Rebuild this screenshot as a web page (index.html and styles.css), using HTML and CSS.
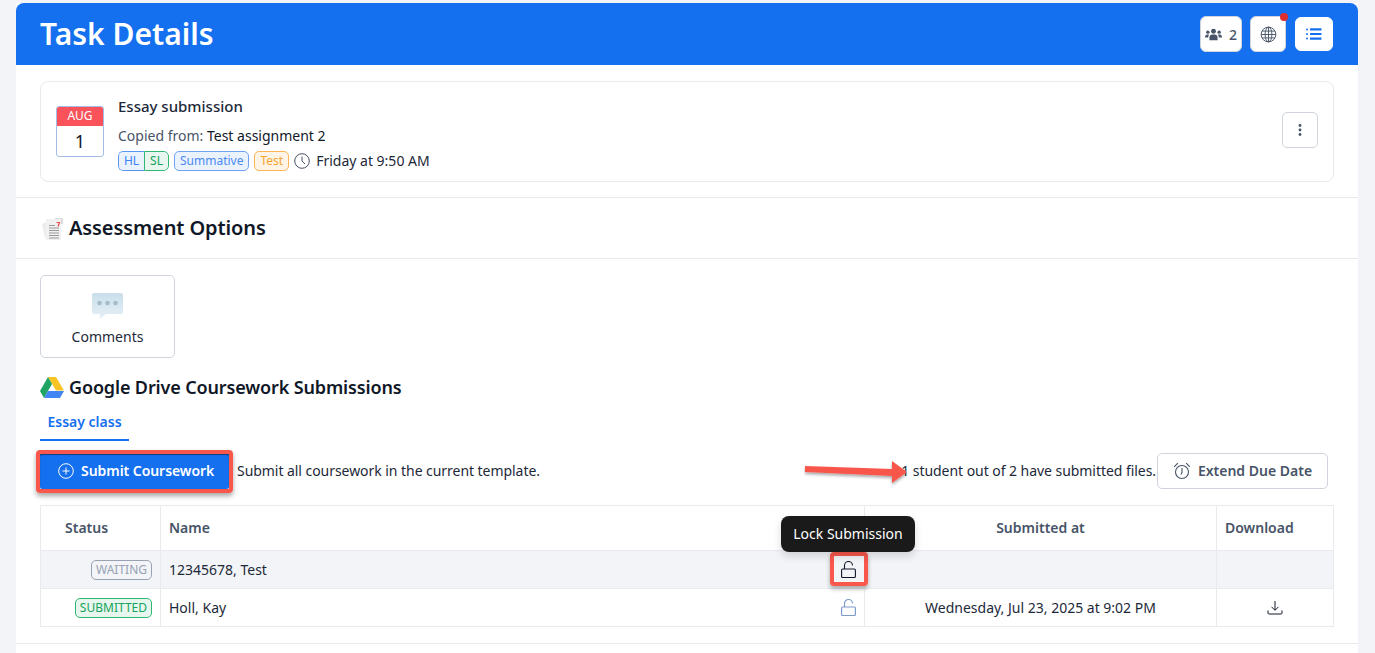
FILE: index.html
```html
<!DOCTYPE html>
<html lang="en">
<head>
<meta charset="utf-8">
<title>Task Details</title>
<link rel="stylesheet" href="styles.css">
</head>
<body>
<main class="page">
  <header class="topbar">
    <h1 class="topbar-title">Task Details</h1>
    <div class="topbar-actions">
      <button class="top-btn top-btn-users">
        <svg class="i-users" viewBox="0 0 18 13" width="17" height="13"><g fill="#475467"><circle cx="9" cy="3" r="2.6"/><circle cx="3" cy="4" r="1.8"/><circle cx="15" cy="4" r="1.8"/><path d="M4.7 12.5V9.6c0-2 1.4-3.2 3-3.2h2.6c1.6 0 3 1.200 3 3.200v2.900z"/><path d="M0 9.800C0 7.800 1.100 6.600 2.400 6.600h1.900c-.6.700-.9 1.700-.9 2.800v.4zM18 9.800c0-2-1.100-3.200-2.400-3.200h-1.900c.6.700.9 1.700.9 2.800v.4z"/></g></svg>
        <span>2</span>
      </button>
      <button class="top-btn top-btn-globe">
        <svg viewBox="0 0 18 18" width="17" height="17" fill="none" stroke="#475467" stroke-width="1"><circle cx="9" cy="9" r="7.800"/><ellipse cx="9" cy="9" rx="3.600" ry="7.800"/><path d="M9 1.200v15.600M1.200 9h15.600M2.200 5.400h13.600M2.200 12.600h13.600"/></svg>
        <span class="dot"></span>
      </button>
      <button class="top-btn top-btn-list">
        <svg viewBox="0 0 16 12" width="16" height="12" fill="#1570ef"><rect x="0" y="0.500" width="2" height="2" rx="1"/><rect x="0" y="5" width="2" height="2" rx="1"/><rect x="0" y="9.500" width="2" height="2" rx="1"/><rect x="4" y="0.300" width="11.500" height="2.200" rx=".5"/><rect x="4" y="4.900" width="11.500" height="2.200" rx=".5"/><rect x="4" y="9.500" width="11.500" height="2.200" rx=".5"/></svg>
      </button>
    </div>
  </header>

  <section class="section section-task">
    <div class="task-card">
      <div class="cal">
        <div class="cal-month">AUG</div>
        <div class="cal-day">1</div>
      </div>
      <div class="task-info">
        <div class="task-name">Essay submission</div>
        <div class="task-copied"><span class="muted">Copied from:</span> Test assignment 2</div>
        <div class="task-tags">
          <span class="pair"><span class="pair-hl">HL</span><span class="pair-sl">SL</span></span>
          <span class="tag tag-blue">Summative</span>
          <span class="tag tag-orange">Test</span>
          <svg class="clock" viewBox="0 0 16 16" width="16" height="16" fill="none" stroke="#475467" stroke-width="1"><circle cx="8" cy="8" r="7.300"/><path d="M8 3.500V8l3 3"/></svg>
          <span class="task-time">Friday at 9:50 AM</span>
        </div>
      </div>
      <button class="kebab" aria-label="More">
        <svg viewBox="0 0 4 14" width="4" height="14" fill="#475467"><circle cx="2" cy="2.500" r="1.400"/><circle cx="2" cy="7" r="1.400"/><circle cx="2" cy="11.500" r="1.400"/></svg>
      </button>
    </div>
  </section>

  <section class="section section-title">
    <svg class="doc-icon" viewBox="0 0 22 22" width="22" height="22">
      <path d="M0 6l5-2 1 15-3 1z" fill="#ececec"/>
      <rect x="13" y="0" width="8" height="6" fill="#d9dcdc"/>
      <rect x="4" y="1" width="15" height="21" fill="#f1f1f1"/>
      <g stroke="#9a9a9a" stroke-width="1"><path d="M7 7.500h6M7 10h10M7 12.500h10M7 15h10M7 17.500h10M7 20h10"/></g>
      <path d="M14.500 4.500h3l-1.500 4" fill="none" stroke="#ea4b4b" stroke-width="1.200"/>
    </svg>
    <h2 class="h-options">Assessment Options</h2>
  </section>

  <section class="section-body">
    <div class="option-card">
      <svg viewBox="0 0 31 26" width="31" height="26"><defs><linearGradient id="bub" x1="0" y1="0" x2="0" y2="1"><stop offset="0" stop-color="#c9deeb"/><stop offset="1" stop-color="#e6f0f6"/></linearGradient></defs><path d="M2 0h27a2 2 0 0 1 2 2v17a2 2 0 0 1-2 2H14l-6 5v-5H2a2 2 0 0 1-2-2V2a2 2 0 0 1 2-2z" fill="url(#bub)"/><g fill="#a4bccc"><circle cx="7.500" cy="10" r="2.300"/><circle cx="15.500" cy="10" r="2.300"/><circle cx="23.500" cy="10" r="2.300"/></g></svg>
      <span class="option-label">Comments</span>
    </div>

    <div class="drive-title">
      <svg viewBox="0 0 24 21" width="24" height="21"><path d="M8 0h8l8 13.500h-8z" fill="#f7c325"/><path d="M8 0l4 7-8 14-4-7z" fill="#1fa463"/><path d="M8 14h16l-4 7H4z" fill="#4285f4"/></svg>
      <h3 class="h-drive">Google Drive Coursework Submissions</h3>
    </div>

    <nav class="tabs"><span class="tab">Essay class</span></nav>

    <div class="toolbar">
      <button class="btn-primary">
        <svg viewBox="0 0 16 16" width="16" height="16" fill="none" stroke="#fff" stroke-width="1"><circle cx="8" cy="8" r="7.300"/><path d="M8 4.500v7M4.500 8h7"/></svg>
        <span class="btn-label">Submit Coursework</span>
      </button>
      <span class="toolbar-text">Submit all coursework in the current template.</span>
      <span class="toolbar-text toolbar-count">1 student out of 2 have submitted files.</span>
      <button class="btn-outline">
        <svg viewBox="0 0 18 18" width="18" height="18" fill="none" stroke="#475467" stroke-width="1.100"><circle cx="9" cy="10" r="6.500"/><path d="M9 6v4.500l-1 2M1.200 4.800L4.800 1.200M16.800 4.800L13.200 1.200"/></svg>
        <span class="btn-label">Extend Due Date</span>
      </button>
    </div>

    <table class="grid">
      <colgroup><col class="c-status"><col class="c-name"><col class="c-at"><col class="c-dl"></colgroup>
      <thead>
        <tr><th class="th-status">Status</th><th class="th-left">Name</th><th>Submitted at</th><th class="th-left">Download</th></tr>
      </thead>
      <tbody>
        <tr class="row-alt">
          <td class="td-status"><span class="badge badge-grey">WAITING</span></td>
          <td class="td-name"><div class="name-wrap">12345678, Test
            <svg class="lock" viewBox="0 0 15 17" width="15" height="17" fill="none" stroke="#101828" stroke-width="1.100"><rect x=".6" y="8" width="13.800" height="8.500" rx="1"/><path d="M3.500 8V4.500a4 4 0 0 1 8 0"/></svg>
          </div></td>
          <td></td><td></td>
        </tr>
        <tr>
          <td class="td-status"><span class="badge badge-green">SUBMITTED</span></td>
          <td class="td-name"><div class="name-wrap">Holl, Kay
            <svg class="lock" viewBox="0 0 15 17" width="15" height="17" fill="none" stroke="#7f9ccb" stroke-width="1.200"><rect x=".6" y="8" width="13.800" height="8.500" rx="1"/><path d="M3.500 8V4.500a4 4 0 0 1 8 0"/></svg>
          </div></td>
          <td class="td-center">Wednesday, Jul 23, 2025 at 9:02 PM</td>
          <td class="td-center"><svg class="dl" viewBox="0 0 16 15" width="16" height="15" fill="none" stroke="#101828" stroke-width="1"><path d="M8 1v9M4.500 6.800L8 10.300l3.500-3.500M1 10.500V13a1 1 0 0 0 1 1h12a1 1 0 0 0 1-1v-2.500"/></svg></td>
        </tr>
      </tbody>
    </table>
    <div class="tail"></div>
  </section>

  <!-- annotations drawn on top of the page -->
  <div class="note-btn"></div>
  <div class="note-lock"></div>
  <svg class="note-arrow" viewBox="0 0 110 36" width="110" height="36">
    <defs><filter id="sh" x="-10%" y="-30%" width="120%" height="170%"><feDropShadow dx="0" dy="2" stdDeviation="1.500" flood-color="#000" flood-opacity=".35"/></filter></defs>
    <path d="M1 7L88 10 88 2 103 13 88 24 88 17 1 13z" fill="#f9574c" filter="url(#sh)"/>
  </svg>
  <div class="tooltip">Lock Submission</div>
</main>
</body>
</html>
```
FILE: styles.css
```css
* { box-sizing: border-box; }
html, body { margin: 0; height: 100%; }
body {
  background: #f2f4f8;
  font-family: "Noto Sans", "Open Sans", sans-serif;
  color: #101828;
  font-size: 14px;
  overflow: hidden;
  padding: 3px 17px 0 16px;
}
button { font-family: inherit; cursor: pointer; }
h1, h2, h3 { margin: 0; }

.page { background: #fff; min-height: 700px; position: relative; }

.topbar {
  height: 62px;
  background: #1570ef;
  border-radius: 8px 8px 0 0;
  display: flex;
  align-items: center;
  justify-content: space-between;
  padding: 0 25px 0 24px;
}
.topbar-title { color: #fff; font-size: 30px; font-weight: 600; line-height: 36px; }
.topbar-actions { display: flex; align-items: center; gap: 8px; }
.top-btn {
  height: 36px;
  background: #fff;
  border: 1px solid #d0d5dd;
  border-radius: 6px;
  display: flex;
  align-items: center;
  justify-content: center;
  position: relative;
  padding: 0;
  color: #475467;
  font-size: 14px;
  font-weight: 500;
}
.top-btn-users { width: 42px; gap: 7px; }
.top-btn-globe { width: 36px; }
.top-btn-list { width: 38px; height: 34px; border-color: #fff; margin-left: 1px; }
.dot {
  position: absolute;
  top: -4px;
  right: -3px;
  width: 8px;
  height: 8px;
  border-radius: 50%;
  background: #e02d2d;
}

.section-task { padding: 16px 24px 15px; border-bottom: 1px solid #e8eaee; }
.task-card {
  height: 101px;
  border: 1px solid #e8eaee;
  border-radius: 8px;
  display: flex;
  align-items: flex-start;
  padding: 24px 15px 0;
}
.cal {
  width: 48px;
  height: 51px;
  border: 1px solid #a3bde6;
  border-radius: 3px;
  overflow: hidden;
  text-align: center;
  margin-right: 14px;
  flex: none;
}
.cal-month {
  background: #f9525a;
  color: #fff;
  font-size: 12px;
  line-height: 19px;
  margin: -1px -1px 0;
  height: 20px;
}
.cal-day { font-size: 18px; line-height: 30px; color: #101828; }
.task-info { flex: 1; margin-top: -10px; }
.task-name { font-size: 15px; line-height: 20px; font-weight: 500; color: #1d2939; }
.task-copied { line-height: 20px; margin-top: 10px; }
.muted { color: #475467; }
.task-tags { display: flex; align-items: center; margin-top: 5px; height: 20px; }
.pair {
  display: flex;
  height: 20px;
  font-size: 12px;
  line-height: 18px;
  border-radius: 5px;
  overflow: hidden;
  margin-right: 5px;
}
.pair-hl {
  width: 26px;
  text-align: center;
  color: #3b82f6;
  background: #eaf2fe;
  border: 1px solid #5a96f0;
  border-right: 0;
  border-radius: 5px 0 0 5px;
}
.pair-sl {
  width: 25px;
  text-align: center;
  color: #17a35c;
  background: #e7f6ee;
  border: 1px solid #2eb872;
  border-radius: 0 5px 5px 0;
}
.tag {
  height: 20px;
  font-size: 12px;
  line-height: 18px;
  border-radius: 5px;
  padding: 0 5px;
  margin-right: 5px;
}
.tag-blue { color: #4a8af0; background: #eaf2fe; border: 1px solid #6fa3f2; }
.tag-orange { color: #f8a52f; background: #fff4e6; border: 1px solid #fbb552; }
.clock { margin-right: 6px; }
.task-time { color: #1d2939; padding-bottom: 2px; }
.kebab {
  margin-top: 6px;
  width: 36px;
  height: 36px;
  background: #fff;
  border: 1px solid #d0d5dd;
  border-radius: 5px;
  display: flex;
  align-items: center;
  justify-content: center;
  padding: 0;
}

.section-title {
  height: 61px;
  border-bottom: 1px solid #e8eaee;
  display: flex;
  align-items: center;
  gap: 5px;
  padding: 0 24px;
}
.doc-icon { margin-top: 1px; margin-left: 2px; }
.h-options { font-size: 20px; font-weight: 600; line-height: 28px; color: #101828; letter-spacing: -.1px; }

.section-body { padding: 16px 24px 0; }
.option-card {
  width: 135px;
  height: 83px;
  border: 1px solid #d0d5dd;
  border-radius: 5px;
  display: flex;
  flex-direction: column;
  align-items: center;
  padding-top: 17px;
}
.option-label { line-height: 20px; margin-top: 8px; color: #1d2939; }

.drive-title { display: flex; align-items: center; gap: 5px; margin-top: 17px; height: 24px; }
.h-drive { font-size: 18px; font-weight: 600; line-height: 24px; color: #101828; letter-spacing: -.14px; }

.tabs { margin-top: 13px; height: 29px; }
.tab {
  display: inline-block;
  width: 89px;
  height: 29px;
  text-align: center;
  color: #1570ef;
  font-weight: 600;
  line-height: 20px;
  border-bottom: 2px solid #1570ef;
}

.toolbar { display: flex; align-items: center; height: 36px; margin-top: 12px; }
.btn-primary {
  width: 189px;
  height: 36px;
  background: #1570ef;
  color: #fff;
  border: 0;
  font-size: 14px;
  font-weight: 600;
  display: flex;
  align-items: center;
  gap: 7px;
  padding: 0 0 0 18px;
  border-radius: 2px;
  box-shadow: inset 0 2px 1px rgba(0,0,0,.45);
  letter-spacing: -.05px;
}
.btn-label { padding-bottom: 2px; }
.toolbar-text { margin-left: 8px; color: #1d2939; letter-spacing: -.05px; padding-bottom: 2px; }
.toolbar-count { margin-left: auto; }
.btn-outline {
  width: 171px;
  height: 36px;
  margin-left: 1px;
  margin-right: 6px;
  background: #fff;
  border: 1px solid #d0d5dd;
  border-radius: 5px;
  color: #475467;
  font-size: 14px;
  font-weight: 600;
  display: flex;
  align-items: center;
  justify-content: center;
  gap: 7px;
  padding: 0;
}

.grid { width: 1293px; margin-top: 16px; border-collapse: collapse; table-layout: fixed; }
.c-status { width: 120px; }
.c-name { width: 704px; }
.c-at { width: 352px; }
.c-dl { width: 117px; }
.grid th, .grid td { border: 1px solid #e8eaee; padding: 0 8px; }
.grid th { height: 45px; font-weight: 600; color: #475467; text-align: center; padding-bottom: 2px; }
.grid th.th-left { text-align: left; }
.grid th.th-status { text-align: left; padding-left: 24px; }
.grid td { height: 38px; color: #1d2939; }
.row-alt td { background: #f2f4f8; }
.grid td.td-status { text-align: right; padding-right: 8px; }
.td-center { text-align: center; }
.name-wrap { display: flex; align-items: center; justify-content: space-between; }
.lock { margin-top: -1px; }
.dl { display: block; margin: 0 auto; }
.badge {
  display: inline-block;
  height: 20px;
  font-size: 12px;
  line-height: 18px;
  padding: 0 4px;
  border-radius: 5px;
}
.badge-grey { color: #98a2b3; border: 1px solid #98a2b3; background: #f2f4f8; }
.badge-green { color: #17a35c; border: 1px solid #2eb872; background: #e7f6ee; }

.tail { margin: 16px -24px 0; border-top: 1px solid #e8eaee; height: 20px; }

.note-btn {
  position: absolute;
  left: 20px;
  top: 447px;
  width: 197px;
  height: 43px;
  border: 4px solid #f9574c;
  border-radius: 4px;
  box-shadow: 0 3px 5px rgba(0,0,0,.35);
  pointer-events: none;
}
.note-lock {
  position: absolute;
  left: 814px;
  top: 549px;
  width: 38px;
  height: 34px;
  border: 4px solid #f9574c;
  border-radius: 4px;
  box-shadow: 0 3px 4px rgba(0,0,0,.3);
}
.note-arrow { position: absolute; left: 788px; top: 456px; }
.tooltip {
  position: absolute;
  left: 765px;
  top: 513px;
  width: 134px;
  height: 36px;
  border-radius: 8px;
  background: #1a1a1a;
  color: #fff;
  font-size: 14px;
  line-height: 36px;
  text-align: center;
  box-shadow: 0 4px 8px rgba(0,0,0,.15);
}
```
